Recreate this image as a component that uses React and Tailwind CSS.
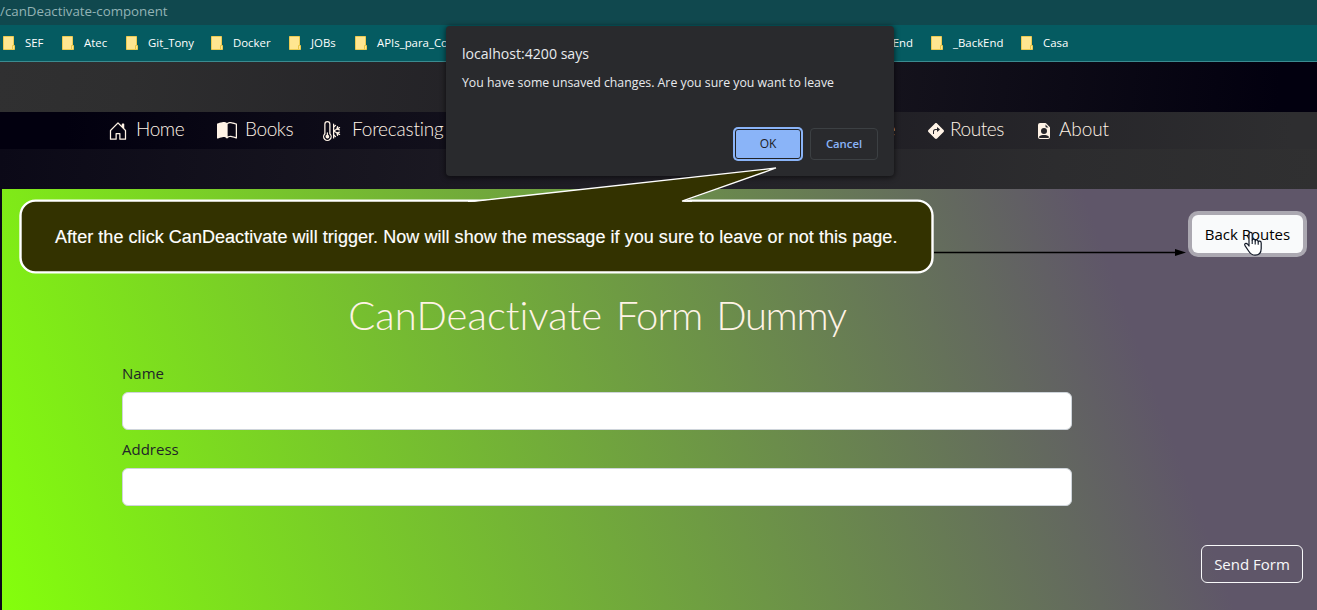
import React from "react";
import {
  BsHouseDoor,
  BsBookHalf,
  BsThermometerSnow,
  BsSignTurnRightFill,
  BsFileEarmarkPersonFill,
} from "react-icons/bs";

function Folder() {
  return (
    <svg className="mr-[10px] h-[14px] w-3 shrink-0" viewBox="0 0 12 14">
      <path d="M0.5 0.5H10.5V9.5H11.5V13.5H0.5Z" fill="#ffe690" stroke="#eccb52" />
      <path d="M9.5 13V9.5H11" fill="none" stroke="#e9c545" />
    </svg>
  );
}

function Bookmark({ width, children }) {
  return (
    <div className={`flex shrink-0 items-center ${width}`}>
      <Folder />
      <span>{children}</span>
    </div>
  );
}

function NavItem({ width, gap, icon, children }) {
  return (
    <a className={`flex shrink-0 items-center ${width} ${gap}`}>
      <span className="pt-1">{icon}</span>
      <span>{children}</span>
    </a>
  );
}

function Field({ label }) {
  return (
    <label className="block pb-2">
      <span className="mb-[7px] block text-[15px] leading-[23px] text-[#212529]">{label}</span>
      <input className="block h-[38px] w-full rounded-md border border-[#ced4da] bg-white px-3" />
    </label>
  );
}

function Dialog() {
  return (
    <div className="absolute top-[26px] left-[446px] flex h-[150px] w-[448px] flex-col rounded bg-[#292a2d] px-4 pt-[17px] pb-4 text-[#e8eaed] shadow-[0_1px_5px_1px_rgba(0,0,0,0.5)]">
      <h2 className="text-[14.1px] leading-[22px]">localhost:4200 says</h2>
      <p className="mt-2 text-[12.3px] leading-5">
        You have some unsaved changes. Are you sure you want to leave
      </p>
      <div className="mt-auto flex justify-end gap-[7px]">
        <button className="-my-px flex h-[34px] w-[70px] rounded-[5px] bg-[#8ab4f8] p-0.5 text-xs text-[#202124]">
          <span className="flex h-full w-full items-center justify-center rounded-[3px] border border-[#202124]">OK</span>
        </button>
        <button className="h-8 w-[68px] rounded border border-[#3c4043] text-[11.3px] font-semibold text-[#8ab4f8]">
          Cancel
        </button>
      </div>
    </div>
  );
}

function Callout() {
  return (
    <div className="absolute top-[160px] left-0 h-[120px] w-[1200px]">
      <svg className="absolute inset-0" width="1200" height="120" viewBox="0 0 1200 120">
        <path d="M934 92.5H1178" stroke="#000" strokeWidth="1.6" />
        <path d="M1175 89L1186 92.5L1175 96Z" fill="#000" />
        <rect x="20.5" y="40.6" width="912" height="71.8" rx="15" fill="#333200" stroke="#fff" strokeWidth="2.4" />
        <path d="M468 44L478 41L776 8L682 42V44Z" fill="#333200" />
        <path d="M468 41.3L478 40.8L776 8L682 41.2H692" fill="none" stroke="#fff" strokeWidth="1.3" />
      </svg>
      <p className="absolute top-[66px] left-[55px] text-[18px] leading-[22px] tracking-[0.047px] whitespace-nowrap text-white font-['Liberation_Sans',sans-serif] [-webkit-text-stroke:0.15px_white]">
        After the click CanDeactivate will trigger. Now will show the message if you sure to leave or not this page.
      </p>
    </div>
  );
}

function Cursor() {
  return (
    <svg className="absolute top-[231px] left-[1243px]" width="20" height="26" viewBox="0 0 20 26">
      <path
        d="M6 15V3.2C6 0.8 9.2 0.8 9.2 3.2V9.5C9.4 7.6 12.2 7.8 12.2 10C12.6 8.4 15.2 8.7 15.2 10.8C15.8 9.5 18.2 9.9 18.2 12V17.5C18.2 21.5 16 24.2 12 24.2C8.5 24.2 7.2 22.5 5.6 20L2 14.6C0.9 12.9 3 11.4 4.4 13Z"
        fill="#fff"
        stroke="#111827"
        strokeWidth="1.2"
        strokeLinejoin="round"
      />
      <path d="M9.2 9.5V13M12.2 10V13.4M15.2 10.8V13.8" stroke="#111827" strokeWidth="1.1" />
    </svg>
  );
}

export default function App() {
  return (
    <div className="relative flex h-[610px] w-[1317px] flex-col overflow-hidden bg-[#0b0917] font-['Open_Sans',sans-serif]">
      <div className="flex h-[25px] items-center bg-[#10484e] pb-0.5 text-[13.3px] text-[#93b3b5]">
        /canDeactivate-component
      </div>
      <div className="flex h-[37px] items-center border-b border-[#3b8b90] bg-[#055b61] pl-[3px] text-[11.4px] text-white">
        <Bookmark width="w-[59px]">SEF</Bookmark>
        <Bookmark width="w-[64px]">Atec</Bookmark>
        <Bookmark width="w-[85px]">Git_Tony</Bookmark>
        <Bookmark width="w-[78px]">Docker</Bookmark>
        <Bookmark width="w-[66px]">JOBs</Bookmark>
        <Bookmark width="w-[200px]">APIs_para_Co</Bookmark>
        <span className="w-[358px] text-right">End</span>
        <span className="w-[18px]" />
        <Bookmark width="w-[90px]">_BackEnd</Bookmark>
        <Bookmark width="w-[90px]">Casa</Bookmark>
      </div>
      <div className="h-[50px] bg-linear-[96deg,#303031_0%,#2e2e2f_10%,#19171f_60%,#02000f_97%]" />
      <nav className="flex h-[37px] items-center bg-linear-[92deg,#02000f_5%,#100e1a_30%,#232227_72%,#2e2e30_98%] pb-[3px] pl-[108px] font-['Lato',sans-serif] text-[19px] font-light tracking-[-0.4px] text-[#fff3e6]">
        <NavItem width="w-[109px]" gap="gap-2" icon={<BsHouseDoor size={20} />}>Home</NavItem>
        <NavItem width="w-[106px]" gap="gap-2" icon={<BsBookHalf size={20} />}>Books</NavItem>
        <NavItem width="w-[139px]" gap="gap-[9px]" icon={<BsThermometerSnow size={20} />}>
          <span className="tracking-[-0.2px]">Forecasting</span>
        </NavItem>
        <span className="w-[433px] text-right">e</span>
        <span className="w-[33px]" />
        <NavItem width="w-[108px]" gap="gap-1.5" icon={<BsSignTurnRightFill size={16} />}>Routes</NavItem>
        <NavItem width="w-[90px]" gap="gap-[7px]" icon={<BsFileEarmarkPersonFill size={16} />}>
          <span className="tracking-[-0.1px]">About</span>
        </NavItem>
      </nav>
      <div className="h-10 bg-linear-[94deg,#0b0917_0%,#1b1922_35%,#2c2c2e_80%,#303031_100%]" />
      <main className="ml-0.5 flex-1 bg-linear-[70deg,#84ff0c_0%,#5f5669_84%] pt-[26px]">
        <div className="flex justify-end pr-[14px]">
          <button className="h-[38px] w-[111px] rounded-md bg-[#f9fafb] text-[15px] text-black shadow-[0_0_0_4px_rgba(248,249,250,0.5)]">
            Back Routes
          </button>
        </div>
        <form className="ml-[120px] w-[950px]">
          <h1 className="mt-[38px] mb-[23px] text-center font-['Lato',sans-serif] text-[40px] leading-[48px] font-light text-[#fff3e6] [word-spacing:3px]">
            <span className="tracking-[0.05px]">CanDeactivate</span> <span className="tracking-[-0.8px]">Form</span>{" "}
            <span className="tracking-[-1.3px]">Dummy</span>
          </h1>
          <Field label="Name" />
          <Field label="Address" />
        </form>
        <div className="mt-[31px] flex justify-end pr-[14px]">
          <button className="h-[38px] w-[102px] rounded-md border border-[#f8f9fa] text-[15px] text-[#f8f9fa]">Send Form</button>
        </div>
      </main>
      <Dialog />
      <Callout />
      <Cursor />
    </div>
  );
}
